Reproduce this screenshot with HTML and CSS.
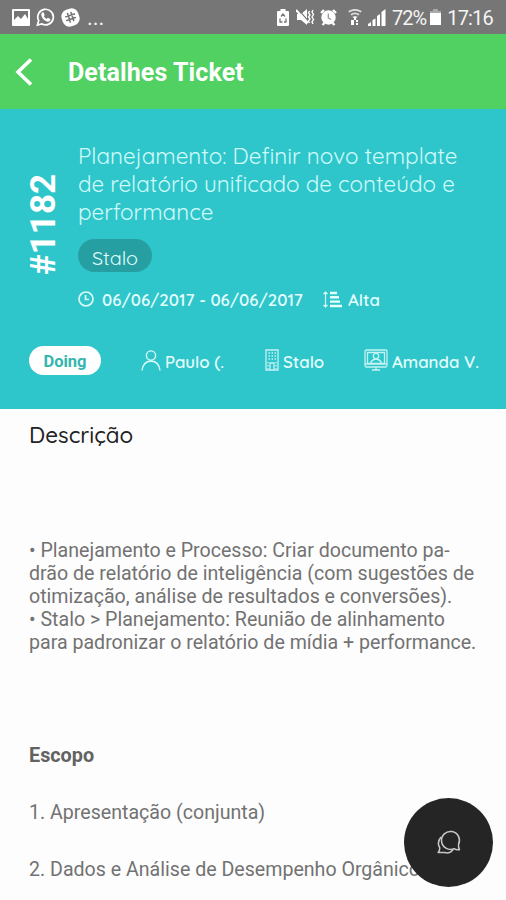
FILE: index.html
```html
<!DOCTYPE html>
<html lang="pt-BR">
<head>
    <meta charset="UTF-8">
    <meta name="viewport" content="width=device-width, initial-scale=1.0">
    <title>Detalhes Ticket</title>
    <link rel="stylesheet" href="styles.css">
</head>
<body>

    <div class="status-bar">
        <div class="status-left">
            <svg width="18" height="17" viewBox="0 0 18 17"><path fill="#fff" fill-rule="evenodd" d="M1 0h16q1 0 1 1v15q0 1-1 1H1q-1 0-1-1V1q0-1 1-1zM2 2v9l4-4 3 3 4-5 3 5V2z"/></svg>
            <svg width="19" height="20" viewBox="0 0 20 20"><path fill="none" stroke="#fff" stroke-width="1.8" d="M1.5 18.5l1.3-4.6A8.2 8.2 0 1 1 6 17.2z"/><path fill="#fff" d="M6.3 5.2l1.5-.2 1.4 3-1 1.2q1 2 3 2.800l1.300-1.300 2.600 1.400q0 2.800-2.800 2.900Q6.500 13.500 5.500 8q0-2 .8-2.800z"/></svg>
            <svg width="19" height="19" viewBox="0 0 19 19"><rect x=".8" y=".8" width="17.400" height="17.400" rx="7" fill="#fff" transform="rotate(-18 9.500 9.500)"/><path stroke="#777" stroke-width="1.600" stroke-linecap="round" d="M6.500 5.500l2.800 8.500M10 4.500l2.700 8M4.800 8.800l8.600-2.900M5.800 12.500l8.500-3"/></svg>
            <span class="dots">...</span>
        </div>
        <div class="status-right">
            <svg class="battery-saver" width="12" height="17" viewBox="0 0 12 17"><path fill="#fff" d="M3.500 2V0h5v2H11q1 0 1 1v13q0 1-1 1H1q-1 0-1-1V3q0-1 1-1z"/><path fill="none" stroke="#777" stroke-width="1.300" d="M4 7.500l2-2.500 2 2.500M3 9.500v3.500h2.500M9 9.500v3.500H7"/></svg>
            <svg class="mute" width="19" height="16" viewBox="0 0 19 16"><path fill="#fff" d="M1 5h4l6-5v16l-6-5H1z"/><path stroke="#777" stroke-width="1.200" d="M2 0l11 13"/><path stroke="#fff" stroke-width="2" d="M0 1l12 13"/><path fill="none" stroke="#fff" stroke-width="1.400" d="M13.500 2l-1 2 1.500 2-1.500 2 1.500 2-1.500 2 1 2M17 1l-1 2 1.500 2.500L16 8l1.500 2.500L16 13l1 2"/></svg>
            <svg class="alarm" width="17" height="17" viewBox="0 0 17 17"><circle cx="8.500" cy="8.500" r="7.200" fill="#fff"/><path stroke="#fff" stroke-width="2.400" d="M1 4l3-3M16 4l-3-3M2.500 16l2-2M14.500 16l-2-2"/><path fill="none" stroke="#999" stroke-width="1.300" d="M8.300 4.500V9l3 1.500"/></svg>
            <svg class="wifi" width="14" height="16" viewBox="0 0 14 16"><path fill="none" stroke="#ddd" stroke-width="1.700" d="M.7 2.800q6.300-4 12.600 0M3 5.800q4-3 8 0M5 8.500q2-1.500 4 0"/><path fill="#fff" d="M6 8h2v3H6zM3 11h3v5H3zM8 11h2v2H8zM8 14h2v2H8z"/></svg>
            <svg class="signal" width="18" height="17" viewBox="0 0 18 17"><path fill="#fff" d="M0 17v-2l3-2v4zM4.500 17v-6l3-1.500V17zM9 17V7l3-2v12zM13.500 17V3L17.500 0v17z"/></svg>
            <span class="percent">72%</span>
            <svg class="battery" width="11" height="16" viewBox="0 0 11 16"><path fill="#aaa" d="M3 0h5v2h3v3H0V2h3z"/><path fill="#fff" d="M0 4h11v12H0z"/></svg>
            <span class="clock">17:16</span>
        </div>
    </div>

    <div class="nav-bar">
        <svg width="18" height="28" viewBox="0 0 18 28"><path fill="none" stroke="#fff" stroke-width="3.600" d="M16 1.500L3 14l13 12.500"/></svg>
        <h1>Detalhes Ticket</h1>
    </div>

    <div class="ticket">
        <div class="ticket-top">
            <div class="ticket-number">#1182</div>
            <div class="ticket-info">
                <h2>
                    Planejamento: Definir novo template<br>
                    de relatório unificado de conteúdo e<br>
                    performance
                </h2>
                <span class="tag">Stalo</span>
                <div class="ticket-meta">
                    <svg width="16" height="16" viewBox="0 0 16 16"><g fill="none" stroke="#dcfafa" stroke-width="1.700"><circle cx="8" cy="8" r="7"/><path d="M7.500 4v4.500H11"/></g></svg>
                    <span class="dates">06/06/2017 - 06/06/2017</span>
                    <svg class="priority-icon" width="19" height="17" viewBox="0 0 19 17"><path fill="none" stroke="#dcfafa" stroke-width="1.200" d="M2.500 1v15M.5 3l2-2 2 2M.5 14l2 2 2-2"/><path stroke="#e6ffff" stroke-width="2.400" d="M7 2h7M7 6.300h9M7 10.600h10M7 15h12"/></svg>
                    <span class="priority">Alta</span>
                </div>
            </div>
        </div>

        <div class="ticket-people">
            <span class="status">Doing</span>
            <div class="person paulo">
                <svg width="20" height="21" viewBox="0 0 20 21"><g fill="none" stroke="#dcfafa" stroke-width="1.400"><circle cx="10" cy="5.500" r="4.600"/><path d="M1 20.500q1-9 9-9.500 8 .5 9 9.500"/></g></svg>
                <span>Paulo (.</span>
            </div>
            <div class="person company">
                <svg width="14" height="22" viewBox="0 0 14 22"><g fill="none" stroke="#c4f3f3" stroke-width="1.300"><path d="M1 1h12v20H1zM5 21v-7h4v7"/><path stroke-dasharray="1.500 1.500" d="M3.500 4h7.500M3.500 7h7.500M3.500 10h7.500M3 13v7M11 13v7"/></g></svg>
                <span>Stalo</span>
            </div>
            <div class="person amanda">
                <svg width="24" height="22" viewBox="0 0 24 22"><g fill="none" stroke="#c4f3f3" stroke-width="1.300"><rect x="1" y="1" width="22" height="17" rx="1.500"/><path d="M3.500 3.500h17v11h-17zM1 15h22M12 18v3M8 21h8"/><circle cx="12" cy="7" r="2.700"/><path d="M6.500 14.500q1-4 5.500-4.500 4.500.5 5.500 4.500"/></g></svg>
                <span>Amanda V.</span>
            </div>
        </div>
    </div>

    <div class="description">
        <h3>Descrição</h3>
        <p class="details">
            • Planejamento e Processo: Criar documento pa-<br>
            drão de relatório de inteligência (com sugestões de<br>
            otimização, análise de resultados e conversões).<br>
            • Stalo &gt; Planejamento: Reunião de alinhamento<br>
            para padronizar o relatório de mídia + performance.
        </p>
        <h4>Escopo</h4>
        <p class="item">1. Apresentação (conjunta)</p>
        <p class="item">2. Dados e Análise de Desempenho Orgânico</p>
    </div>

    <button class="chat-button" aria-label="Chat">
        <svg width="26" height="26" viewBox="0 0 26 26"><g fill="none" stroke="#c8c8c8" stroke-width="1.500" stroke-linejoin="round"><path d="M22.500 15.500a9 9 0 1 0-4.500 4.200q2.500 1.500 5.500 1-1.200-2-1-5.200z"/><path d="M5 8q-4.500 5.500-1.300 10.500 .3 3-1.500 5h6.500q5 1.500 8.300-2.500"/></g></svg>
    </button>

</body>
</html>
```
FILE: styles.css
```css
body {
    font-family: Roboto, sans-serif;
    background-color: #fdfdfd;
    margin: 0;
    height: 900px;
    overflow: hidden;
}
h1, h2, h3, h4, p {
    margin: 0;
    white-space: nowrap;
}
svg {
    display: block;
    flex-shrink: 0;
}
span {
    white-space: nowrap;
}
.status-bar {
    display: flex;
    justify-content: space-between;
    box-sizing: border-box;
    height: 34px;
    padding: 0 13px 0 12px;
    background-color: #767676;
    color: #f4f4f4;
}
.status-left, .status-right {
    display: flex;
    align-items: center;
}
.status-left {
    gap: 6px;
}
.status-right {
    font-size: 20px;
}
.dots {
    font-size: 22px;
    margin-left: 1px;
}
.mute {
    margin-left: 7px;
}
.alarm {
    margin-left: 5px;
}
.wifi {
    margin-left: 11px;
}
.signal {
    margin-left: 6px;
}
.percent {
    margin-left: 6px;
    padding-top: 2px;
    letter-spacing: -1px;
}
.battery {
    margin-left: 4px;
}
.clock {
    margin-left: 6px;
    letter-spacing: -0.8px;
    padding-top: 2px;
}
.nav-bar {
    display: flex;
    align-items: center;
    height: 75px;
    padding-left: 15px;
    gap: 35px;
    background-color: #50d162;
}
.nav-bar h1 {
    font-size: 25px;
    font-weight: bold;
    letter-spacing: 0.1px;
    color: white;
    padding-top: 2px;
}
.ticket {
    box-sizing: border-box;
    height: 300px;
    padding-top: 33px;
    background-color: #2ec6ca;
    color: #e4fdfd;
    font-family: Quicksand, Lato, sans-serif;
}
.ticket-top {
    display: flex;
    padding-left: 24px;
}
.ticket-number {
    writing-mode: vertical-rl;
    transform: rotate(180deg);
    width: 40px;
    height: 133px;
    line-height: 40px;
    font-family: Roboto, sans-serif;
    font-size: 35px;
    font-weight: bold;
    color: white;
}
.ticket-info {
    margin-left: 14px;
}
.ticket-info h2 {
    font-size: 22.4px;
    font-weight: normal;
    line-height: 28px;
    color: #d0fafa;
}
.tag {
    display: block;
    width: 74px;
    height: 33px;
    margin-top: 13px;
    border-radius: 17px;
    background-color: #259fa2;
    font-size: 19.8px;
    line-height: 37px;
    text-align: center;
}
.ticket-meta {
    display: flex;
    align-items: center;
    height: 22px;
    margin-top: 16px;
    font-size: 16.8px;
    font-weight: 600;
}
.dates {
    margin-left: 8px;
}
.priority-icon {
    margin-left: 20px;
}
.priority {
    margin-left: 6px;
}
.ticket-people {
    display: flex;
    align-items: center;
    height: 30px;
    margin-top: 35px;
    padding-left: 29px;
    font-size: 16.8px;
}
.status {
    width: 72px;
    height: 29px;
    border-radius: 15px;
    background-color: white;
    color: #35b6ae;
    font-family: Roboto, sans-serif;
    font-size: 16.5px;
    font-weight: bold;
    line-height: 31px;
    text-align: center;
}
.person {
    display: flex;
    align-items: center;
    gap: 4px;
    font-weight: 600;
}
.person span {
    padding-top: 3px;
}
.paulo {
    width: 84px;
    margin-left: 40px;
}
.company {
    width: 60px;
    margin-left: 40px;
}
.amanda {
    margin-left: 39px;
}
.description {
    padding: 11px 0 0 29px;
    color: #727272;
}
.description h3 {
    font-family: Quicksand, Lato, sans-serif;
    font-size: 22.4px;
    font-weight: 500;
    line-height: 30px;
    color: #222;
}
.details {
    margin-top: 89px;
    font-size: 19.6px;
    line-height: 23px;
}
.description h4 {
    margin-top: 90px;
    font-size: 19.8px;
    line-height: 23px;
    color: #626262;
}
.item {
    margin-top: 34px;
    font-size: 19.6px;
    line-height: 23px;
}
.chat-button {
    position: absolute;
    left: 404px;
    top: 798px;
    display: flex;
    align-items: center;
    justify-content: center;
    width: 89px;
    height: 89px;
    padding: 0 0 2px;
    border: none;
    border-radius: 50%;
    background-color: #252525;
    box-sizing: border-box;
}
```
